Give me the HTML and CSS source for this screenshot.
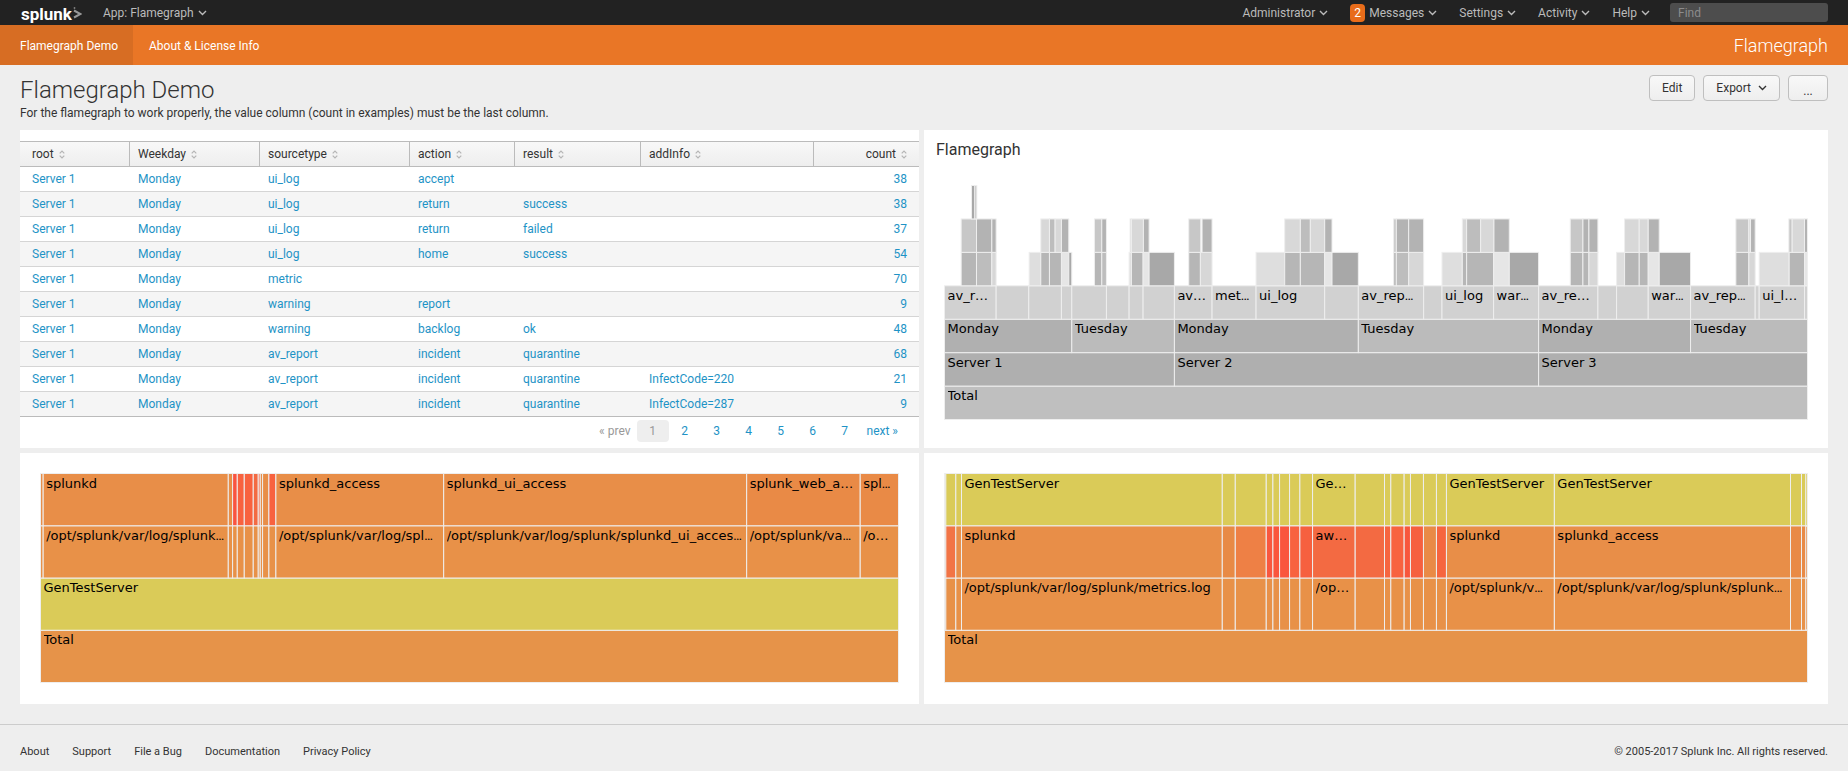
FILE: index.html
```html
<!DOCTYPE html>
<html lang="en">
<head>
  <meta charset="UTF-8" />
  <meta name="viewport" content="width=device-width, initial-scale=1.0" />
  <title>Flamegraph Demo</title>
  <link rel="stylesheet" href="styles.css">
</head>
<body>
  <svg class="defs" aria-hidden="true">
    <symbol id="caret" viewBox="0 0 9 6"><path d="M1 1l3.5 3.5L8 1" fill="none" stroke="currentColor" stroke-width="1.4"/></symbol>
    <symbol id="sort" viewBox="0 0 6 9"><path d="M.7 3.3L3 1l2.3 2.3M.7 5.7L3 8l2.3-2.3" fill="none" stroke="currentColor" stroke-width="1.2"/></symbol>
  </svg>

  <header class="topbar">
    <a class="logo" href="#">splunk<svg viewBox="0 0 9 13" aria-hidden="true"><path d="M1 3.5l6.5 3.5L1 10.500" fill="none" stroke="#999" stroke-width="2"/><path d="M1.500 0v2" stroke="#777" stroke-width="1.500"/></svg></a>
    <button class="menu">App: Flamegraph <svg class="caret"><use href="#caret"/></svg></button>
    <nav class="menus">
      <button class="menu">Administrator <svg class="caret"><use href="#caret"/></svg></button>
      <button class="menu"><span class="badge">2</span>Messages <svg class="caret"><use href="#caret"/></svg></button>
      <button class="menu">Settings <svg class="caret"><use href="#caret"/></svg></button>
      <button class="menu">Activity <svg class="caret"><use href="#caret"/></svg></button>
      <button class="menu">Help <svg class="caret"><use href="#caret"/></svg></button>
    </nav>
    <input class="find" type="text" placeholder="Find" aria-label="Find">
  </header>

  <nav class="appbar">
    <a class="active" href="#">Flamegraph Demo</a>
    <a href="#">About &amp; License Info</a>
    <span class="app-name">Flamegraph</span>
  </nav>

  <main>
    <div class="page-head">
      <div>
        <h1>Flamegraph Demo</h1>
        <p>For the flamegraph to work properly, the value column (count in examples) must be the last column.</p>
      </div>
      <div class="actions">
        <button class="btn">Edit</button>
        <button class="btn">Export <svg class="caret"><use href="#caret"/></svg></button>
        <button class="btn more">...</button>
      </div>
    </div>

    <div class="dashboard">
      <section class="panel table-panel">
        <table class="results">
          <colgroup>
            <col class="c-root"><col class="c-day"><col class="c-type"><col class="c-action"><col class="c-result"><col class="c-info"><col>
          </colgroup>
          <thead>
            <tr>
              <th>root <svg class="sort"><use href="#sort"/></svg></th>
              <th>Weekday <svg class="sort"><use href="#sort"/></svg></th>
              <th>sourcetype <svg class="sort"><use href="#sort"/></svg></th>
              <th>action <svg class="sort"><use href="#sort"/></svg></th>
              <th>result <svg class="sort"><use href="#sort"/></svg></th>
              <th>addInfo <svg class="sort"><use href="#sort"/></svg></th>
              <th>count <svg class="sort"><use href="#sort"/></svg></th>
            </tr>
          </thead>
          <tbody>
            <tr><td>Server 1</td><td>Monday</td><td>ui_log</td><td>accept</td><td></td><td></td><td>38</td></tr>
            <tr><td>Server 1</td><td>Monday</td><td>ui_log</td><td>return</td><td>success</td><td></td><td>38</td></tr>
            <tr><td>Server 1</td><td>Monday</td><td>ui_log</td><td>return</td><td>failed</td><td></td><td>37</td></tr>
            <tr><td>Server 1</td><td>Monday</td><td>ui_log</td><td>home</td><td>success</td><td></td><td>54</td></tr>
            <tr><td>Server 1</td><td>Monday</td><td>metric</td><td></td><td></td><td></td><td>70</td></tr>
            <tr><td>Server 1</td><td>Monday</td><td>warning</td><td>report</td><td></td><td></td><td>9</td></tr>
            <tr><td>Server 1</td><td>Monday</td><td>warning</td><td>backlog</td><td>ok</td><td></td><td>48</td></tr>
            <tr><td>Server 1</td><td>Monday</td><td>av_report</td><td>incident</td><td>quarantine</td><td></td><td>68</td></tr>
            <tr><td>Server 1</td><td>Monday</td><td>av_report</td><td>incident</td><td>quarantine</td><td>InfectCode=220</td><td>21</td></tr>
            <tr><td>Server 1</td><td>Monday</td><td>av_report</td><td>incident</td><td>quarantine</td><td>InfectCode=287</td><td>9</td></tr>
          </tbody>
        </table>
        <nav class="pagination" aria-label="Pages">
          <span class="prev">« prev</span>
          <a class="current" href="#">1</a>
          <a href="#">2</a>
          <a href="#">3</a>
          <a href="#">4</a>
          <a href="#">5</a>
          <a href="#">6</a>
          <a href="#">7</a>
          <a class="next" href="#">next »</a>
        </nav>
      </section>

      <section class="panel titled">
        <h2>Flamegraph</h2>
        <svg class="flame tall" id="servers"></svg>
      </section>

      <section class="panel chart">
        <svg class="flame" id="sources"></svg>
      </section>

      <section class="panel chart">
        <svg class="flame" id="hosts"></svg>
      </section>
    </div>
  </main>

  <footer>
    <a href="#">About</a>
    <a href="#">Support</a>
    <a href="#">File a Bug</a>
    <a href="#">Documentation</a>
    <a href="#">Privacy Policy</a>
    <span class="copyright">© 2005-2017 Splunk Inc. All rights reserved.</span>
  </footer>

  <script src="flamegraph.js"></script>
</body>
</html>
```

FILE: styles.css
```css
:root {
  --page: #eeeeee;
  --text: #333;
  --link: #1e93c6;
  --orange: #e97626;
}

* {
  box-sizing: border-box;
}

body {
  margin: 0;
  background: var(--page);
  color: var(--text);
  font-family: Roboto, "Liberation Sans", sans-serif;
  font-size: 12px;
  line-height: 20px;
}

a {
  color: inherit;
  text-decoration: none;
}

button,
input {
  font: inherit;
}

.defs {
  display: none;
}

.caret {
  width: 9px;
  height: 6px;
}

/* top bar */
.topbar {
  display: flex;
  align-items: center;
  height: 25px;
  padding: 0 20px;
  background: #222;
  color: #bbb;
}

.logo {
  display: flex;
  align-items: center;
  padding: 2px 0 0 1px;
  color: #fff;
  font-size: 17px;
  font-weight: 700;
}

.logo svg {
  width: 9px;
  height: 13px;
  margin-left: 1px;
}

.menu {
  display: flex;
  align-items: center;
  gap: 4px;
  padding: 0;
  border: none;
  background: none;
  color: inherit;
  cursor: pointer;
}

.topbar > .menu {
  margin-left: 21px;
}

.menus {
  display: flex;
  gap: 22px;
  margin-left: auto;
}

.badge {
  width: 15px;
  height: 18px;
  border-radius: 4px;
  background: #e86c1a;
  color: #fff;
  line-height: 18px;
}

.find {
  width: 158px;
  height: 19px;
  margin-left: 20px;
  padding: 0 8px;
  border: none;
  border-radius: 3px;
  background: #4d4d4d;
  color: #ccc;
}

.find::placeholder {
  color: #8c8c8c;
}

/* app bar */
.appbar {
  display: flex;
  height: 40px;
  padding-right: 20px;
  background: var(--orange);
  color: #fff;
  line-height: 38px;
}

.appbar a,
.app-name {
  padding: 2px 16px 0;
}

.appbar .active {
  padding: 2px 15px 0 20px;
  background: #d76d23;
}

.appbar .app-name {
  margin-left: auto;
  padding-right: 0;
  font-size: 18px;
  font-weight: 300;
}

/* page heading */
main {
  padding: 10px 20px 20px;
}

.page-head {
  display: flex;
  justify-content: space-between;
}

h1 {
  margin: 0;
  padding-top: 2px;
  font-size: 24px;
  font-weight: 300;
  line-height: 26px;
}

.page-head p {
  margin: 0 0 7px;
}

.actions {
  display: flex;
  gap: 8px;
}

.btn {
  display: flex;
  align-items: center;
  gap: 7px;
  height: 26px;
  padding: 0 12px;
  border: 1px solid #bfbfbf;
  border-radius: 4px;
  background: linear-gradient(#f8f8f8, #eee);
  color: var(--text);
  cursor: pointer;
}

.more {
  width: 40px;
  justify-content: center;
  padding-top: 6px;
}

/* dashboard */
.dashboard {
  display: grid;
  grid-template-columns: 899fr 904fr;
  gap: 5px;
}

.panel {
  min-width: 0;
  background: #fff;
}

.table-panel {
  padding: 11px 0 6px;
}

.titled {
  padding: 10px 20px 28px;
}

.titled h2 {
  margin: 0 0 25px -8px;
  font-size: 16px;
  font-weight: 400;
  line-height: 20px;
}

.chart {
  padding: 20px 20px 21px;
}

/* results table */
.results {
  width: 100%;
  table-layout: fixed;
  border-collapse: separate;
  border-spacing: 0;
}

.c-root { width: 110px; }
.c-day { width: 130px; }
.c-type { width: 150px; }
.c-action { width: 105px; }
.c-result { width: 126px; }
.c-info { width: 173px; }

.results th,
.results td {
  height: 25px;
  padding: 0 8px;
  text-align: left;
}

.results th {
  height: 26px;
  border: solid #bbb;
  border-width: 1px 1px 1px 0;
  background: linear-gradient(#f8f8f8, #eee);
  font-weight: 400;
}

.results td {
  border-bottom: 1px solid #d5d5d5;
  color: var(--link);
}

.results tr:last-child td {
  border-bottom-color: #bbb;
}

.results tr:nth-child(even) td {
  background: #f5f5f5;
}

.results tr > :first-child {
  padding-left: 12px;
}

.results tr > :last-child {
  padding-right: 12px;
  border-right: none;
  text-align: right;
}

.sort {
  width: 6px;
  height: 9px;
  margin-left: 2px;
  color: #b5b5b5;
  vertical-align: -1px;
}

.pagination {
  display: flex;
  justify-content: flex-end;
  margin-top: 3px;
  padding-right: 15px;
  color: var(--link);
  line-height: 22px;
}

.pagination a {
  min-width: 32px;
  border-radius: 4px;
  text-align: center;
}

.pagination .prev,
.pagination .next {
  padding: 0 6px;
}

.pagination .prev,
.pagination .current {
  color: #999;
}

.pagination .current {
  background: #eee;
}

/* flame graphs */
.flame {
  display: block;
  width: 100%;
  height: 210px;
  overflow: visible;
}

.flame.tall {
  height: 235px;
}

.flame rect {
  stroke: #eee;
}

/* the ellipsis takes the font of this box, the name the one of its span */
.flame-label {
  margin: 0 4px 0 3px;
  overflow: hidden;
  color: #000;
  font-size: 13px;
  line-height: 20px;
  text-overflow: ellipsis;
  white-space: nowrap;
}

.flame-label span {
  font-family: "DejaVu Sans", Verdana, sans-serif;
}

/* footer */
footer {
  display: flex;
  gap: 23px;
  padding: 17px 20px 9px;
  border-top: 1px solid #ccc;
  font-size: 11px;
}

.copyright {
  margin-left: auto;
}
```

FILE: flamegraph.js
```js
const SVG_NS = "http://www.w3.org/2000/svg";
const MIN_LABEL_WIDTH = 35;

// Rows go from the root upwards. Each frame is [start, end, color, label].
const servers = [
  [[0, 2590, "#bfbfbf", "Total"]],
  [[0, 690, "#afafaf", "Server 1"], [690, 1783, "#afafaf", "Server 2"], [1783, 2590, "#afafaf", "Server 3"]],
  [
    [0, 382, "#b0b0b0", "Monday"], [382, 690, "#bbbbbb", "Tuesday"],
    [690, 1242, "#b0b0b0", "Monday"], [1242, 1783, "#bbbbbb", "Tuesday"],
    [1783, 2239, "#b0b0b0", "Monday"], [2239, 2590, "#bbbbbb", "Tuesday"]
  ],
  [
    [0, 155, "#d1d1d1", "av_r…"], [155, 253, "#d1d1d1"], [253, 351, "#d1d1d1"], [351, 382, "#d1d1d1"],
    [382, 486, "#d1d1d1"], [486, 554, "#d1d1d1"], [554, 596, "#d1d1d1"], [596, 690, "#d1d1d1"],
    [690, 803, "#d1d1d1", "av…"], [803, 935, "#d1d1d1", "metric"], [935, 1141, "#d1d1d1", "ui_log"], [1141, 1242, "#d1d1d1"],
    [1242, 1438, "#d1d1d1", "av_report"], [1438, 1493, "#d1d1d1"], [1493, 1648, "#d1d1d1", "ui_log"], [1648, 1783, "#d1d1d1", "warning"],
    [1783, 1961, "#d1d1d1", "av_re…"], [1961, 2017, "#d1d1d1"], [2017, 2112, "#d1d1d1"], [2112, 2239, "#d1d1d1", "warning"],
    [2239, 2433, "#d1d1d1", "av_report"], [2433, 2445, "#d1d1d1"], [2445, 2581, "#d1d1d1", "ui_l…"], [2581, 2590, "#d1d1d1"]
  ],
  [
    [50, 96, "#b6b6b6"], [96, 142, "#bdbdbd"], [142, 155, "#d7d7d7"],
    [254, 289, "#dedede"], [289, 315, "#b6b6b6"], [315, 351, "#b6b6b6"], [351, 373, "#e6e6e6"], [373, 382, "#a8a8a8"],
    [450, 472, "#b6b6b6"], [472, 486, "#bdbdbd"],
    [554, 561, "#dedede"], [561, 596, "#b6b6b6"], [596, 614, "#e6e6e6"], [614, 690, "#a8a8a8"],
    [733, 768, "#b6b6b6"], [768, 803, "#d7d7d7"],
    [935, 1021, "#dedede"], [1021, 1068, "#b6b6b6"], [1068, 1141, "#b6b6b6"], [1141, 1163, "#e6e6e6"], [1163, 1242, "#a8a8a8"],
    [1348, 1356, "#b6b6b6"], [1356, 1393, "#bdbdbd"], [1393, 1438, "#d7d7d7"],
    [1493, 1554, "#dedede"], [1554, 1567, "#b6b6b6"], [1567, 1648, "#b6b6b6"], [1648, 1695, "#e6e6e6"], [1695, 1783, "#a8a8a8"],
    [1878, 1916, "#b6b6b6"], [1916, 1934, "#b6b6b6"], [1934, 1961, "#d7d7d7"],
    [2017, 2041, "#dedede"], [2041, 2085, "#b6b6b6"], [2085, 2112, "#b6b6b6"], [2112, 2145, "#e6e6e6"], [2145, 2239, "#a8a8a8"],
    [2375, 2414, "#b6b6b6"], [2414, 2433, "#d7d7d7"],
    [2445, 2535, "#dedede"], [2535, 2581, "#b6b6b6"], [2581, 2590, "#e6e6e6"]
  ],
  [
    [50, 96, "#c7c7c7"], [96, 142, "#b3b3b3"], [142, 155, "#b3b3b3"],
    [289, 315, "#d8d8d8"], [315, 332, "#bdbdbd"], [332, 351, "#d8d8d8"], [351, 373, "#b3b3b3"],
    [450, 472, "#c7c7c7"], [472, 486, "#b3b3b3"],
    [557, 561, "#d8d8d8"], [561, 597, "#d8d8d8"], [597, 614, "#b3b3b3"],
    [733, 769, "#c7c7c7"], [773, 803, "#b3b3b3"],
    [1021, 1068, "#d8d8d8"], [1068, 1098, "#bdbdbd"], [1098, 1141, "#d8d8d8"], [1141, 1163, "#b3b3b3"],
    [1348, 1356, "#c7c7c7"], [1356, 1393, "#b3b3b3"], [1393, 1438, "#b3b3b3"],
    [1554, 1567, "#d8d8d8"], [1567, 1609, "#bdbdbd"], [1609, 1649, "#d8d8d8"], [1649, 1695, "#b3b3b3"],
    [1878, 1916, "#c7c7c7"], [1916, 1934, "#b3b3b3"], [1934, 1961, "#b3b3b3"],
    [2041, 2085, "#d8d8d8"], [2085, 2112, "#d8d8d8"], [2112, 2145, "#b3b3b3"],
    [2375, 2414, "#c7c7c7"], [2414, 2419, "#d8d8d8"], [2419, 2433, "#b3b3b3"],
    [2534, 2544, "#c7c7c7"], [2544, 2581, "#d8d8d8"], [2581, 2590, "#b3b3b3"]
  ],
  [[81, 91, "#a8a8a8"], [91, 97, "#c0c0c0"]]
];

const sources = [
  [[0, 2577, "#e69349", "Total"]],
  [[0, 2577, "#dacb58", "GenTestServer"]],
  [
    [0, 8, "#e89148"], [8, 564, "#e89148", "/opt/splunk/var/log/splunk/metrics.log"],
    [564, 577, "#e89148"], [577, 591, "#e89148"], [591, 612, "#e89148"], [612, 639, "#e89148"],
    [639, 654, "#e89148"], [654, 660, "#e89148"], [660, 667, "#e89148"], [667, 686, "#e89148"], [686, 707, "#e89148"],
    [707, 1211, "#e89148", "/opt/splunk/var/log/splunk/splunkd_access.log"],
    [1211, 2121, "#e89148", "/opt/splunk/var/log/splunk/splunkd_ui_access.log"],
    [2121, 2462, "#e89148", "/opt/splunk/var/log/splunk/web_access.log"],
    [2462, 2577, "#e89148", "/o…"]
  ],
  [
    [0, 8, "#e88e48"], [8, 564, "#e88e48", "splunkd"],
    [564, 577, "#e88e48"], [577, 591, "#fa5440"], [591, 612, "#f8623f"], [612, 639, "#f8623f"],
    [639, 654, "#f36a42"], [654, 660, "#f8623f"], [660, 667, "#e88e48"], [667, 686, "#e88e48"], [686, 707, "#f8623f"],
    [707, 1211, "#e88e48", "splunkd_access"],
    [1211, 2121, "#e88e48", "splunkd_ui_access"],
    [2121, 2462, "#e98a46", "splunk_web_a…"],
    [2462, 2577, "#e98a46", "splunk_web_service"]
  ]
];

// [start, end, sourcetype color, source, sourcetype, host]
const hostColumns = [
  [0, 4, "#e88e48"],
  [4, 34, "#f27445"],
  [34, 51, "#e88e48"],
  [51, 834, "#e88e48", "/opt/splunk/var/log/splunk/metrics.log", "splunkd", "GenTestServer"],
  [834, 873, "#e88a46"],
  [873, 966, "#ee8045"],
  [966, 986, "#f9573f"],
  [986, 1006, "#fa553d"],
  [1006, 1036, "#fa553d"],
  [1036, 1067, "#f8623f"],
  [1067, 1105, "#f6603f"],
  [1105, 1233, "#f36a42", "/op…", "aw…", "Ge…"],
  [1233, 1321, "#f36a42"],
  [1321, 1340, "#f6653f"],
  [1340, 1380, "#f8623f"],
  [1380, 1399, "#f8563c"],
  [1399, 1438, "#f6603f"],
  [1438, 1477, "#e98a46"],
  [1477, 1507, "#f6653f"],
  [1507, 1831, "#e88e48", "/opt/splunk/var/log/splunk/splunkd.log", "splunkd", "GenTestServer"],
  [1831, 2540, "#e88e48", "/opt/splunk/var/log/splunk/splunkd_access.log", "splunkd_access", "GenTestServer"],
  [2540, 2573, "#e98a46"],
  [2573, 2586, "#e98a46"],
  [2586, 2591, "#e98a46"]
];

const hosts = [
  [[0, 2591, "#e69349", "Total"]],
  hostColumns.map(c => [c[0], c[1], "#e89148", c[3]]),
  hostColumns.map(c => [c[0], c[1], c[2], c[4]]),
  hostColumns.map(c => [c[0], c[1], "#dacb58", c[5]])
];

function addLabel(svg, text, x, y, width, height) {
  const box = document.createElementNS(SVG_NS, "foreignObject");
  box.setAttribute("x", x);
  box.setAttribute("y", y);
  box.setAttribute("width", width);
  box.setAttribute("height", height);
  const label = document.createElement("div");
  label.className = "flame-label";
  const name = document.createElement("span");
  name.textContent = text;
  label.appendChild(name);
  box.appendChild(label);
  svg.appendChild(box);
}

function drawFlame(id, rows) {
  const svg = document.getElementById(id);
  const size = svg.getBoundingClientRect();
  const scale = (size.width - 1) / rows[0][0][1];
  const rowHeight = (size.height - 1) / rows.length;
  svg.replaceChildren();

  rows.forEach((row, level) => {
    const y = size.height - 0.5 - (level + 1) * rowHeight;
    row.forEach(([start, end, color, label]) => {
      const x = 0.5 + start * scale;
      const width = (end - start) * scale;
      const rect = document.createElementNS(SVG_NS, "rect");
      rect.setAttribute("x", x);
      rect.setAttribute("y", y);
      rect.setAttribute("width", width);
      rect.setAttribute("height", rowHeight);
      rect.setAttribute("fill", color);
      svg.appendChild(rect);
      if (label && width >= MIN_LABEL_WIDTH) {
        addLabel(svg, label, x, y, width, rowHeight);
      }
    });
  });
}

function drawAll() {
  drawFlame("servers", servers);
  drawFlame("sources", sources);
  drawFlame("hosts", hosts);
}

window.addEventListener("resize", drawAll);
drawAll();
```
